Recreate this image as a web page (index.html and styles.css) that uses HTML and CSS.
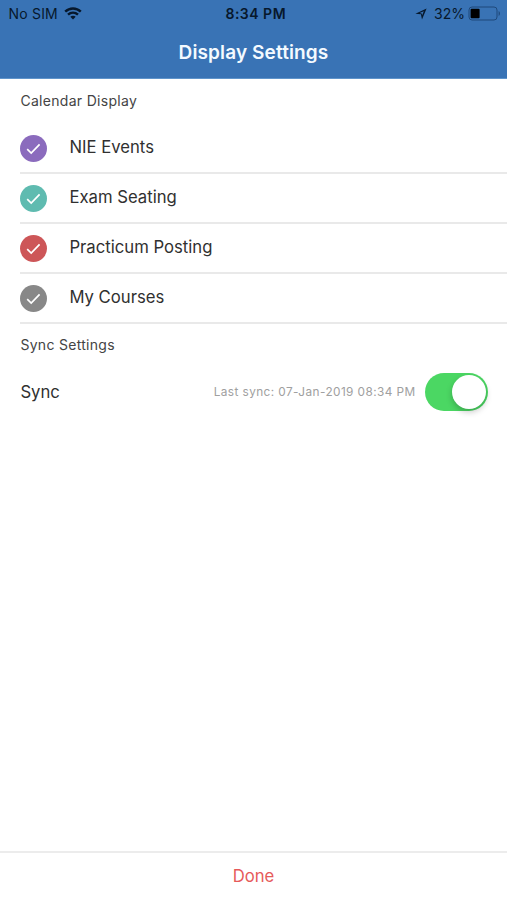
FILE: index.html
```html
<!DOCTYPE html>
<html lang="en">
    <head>
        <title>Display Settings</title>
        <meta charset="UTF-8">
        <meta name="viewport" content="width=device-width, initial-scale=1">
        <link rel="stylesheet" href="styles.css">
    </head>

    <body>
        <header class="header">
            <div class="status-bar">
                <div class="status-left">
                    <span class="carrier">No SIM</span>
                    <svg width="18" height="13" viewBox="0 0 18 13" fill="none" stroke="#07182c" stroke-width="2.4">
                        <path d="M1.2 4.7C5.6 .4 12.4 .4 16.8 4.7"/>
                        <path d="M4 7.7c2.9-2.7 7.1-2.7 10 0"/>
                        <path d="M9 12.4L6.3 9.8c1.5-1.4 3.9-1.4 5.4 0z" fill="#07182c" stroke="none"/>
                    </svg>
                </div>
                <span class="clock">8:34 PM</span>
                <div class="status-right">
                    <svg class="location" width="12" height="12" viewBox="0 0 12 12">
                        <path d="M11.6 .4L7 11.4 5.9 6.3 .4 5.7zM8.8 3.2L4.6 5l2.1.4.4 1.8z" fill="#07182c" fill-rule="evenodd"/>
                    </svg>
                    <span class="percent">32%</span>
                    <svg width="33" height="15" viewBox="0 0 33 15">
                        <rect x="1" y="1" width="28" height="13" rx="3" fill="none" stroke="#1f497b"/>
                        <rect x="2.6" y="2.8" width="9" height="9.5" rx="1" fill="#000"/>
                        <path d="M30.6 5c1.8.8 1.8 4.2 0 5z" fill="#1f497b"/>
                    </svg>
                </div>
            </div>
            <h1>Display Settings</h1>
        </header>

        <main>
            <h2>Calendar Display</h2>
            <ul class="calendars">
                <li>
                    <svg class="check purple" viewBox="0 0 27 27"><path d="M7.2 14.1l4 3.9 8.4-8.6"/></svg>
                    <span>NIE Events</span>
                </li>
                <li>
                    <svg class="check teal" viewBox="0 0 27 27"><path d="M7.2 14.1l4 3.9 8.4-8.6"/></svg>
                    <span>Exam Seating</span>
                </li>
                <li>
                    <svg class="check red" viewBox="0 0 27 27"><path d="M7.2 14.1l4 3.9 8.4-8.6"/></svg>
                    <span>Practicum Posting</span>
                </li>
                <li>
                    <svg class="check gray" viewBox="0 0 27 27"><path d="M7.2 14.1l4 3.9 8.4-8.6"/></svg>
                    <span>My Courses</span>
                </li>
            </ul>

            <h2 class="sync-title">Sync Settings</h2>
            <div class="sync-row">
                <span class="sync-label">Sync</span>
                <span class="last-sync">Last sync: 07-Jan-2019 08:34 PM</span>
                <div class="switch"><div class="knob"></div></div>
            </div>
        </main>

        <footer class="done">Done</footer>
    </body>
</html>
```

FILE: styles.css
```css
* {
    box-sizing: border-box;
}
body {
    display: flex;
    flex-direction: column;
    height: 100vh;
    margin: 0;
    font-family: Inter, "Liberation Sans", sans-serif;
    color: #303030;
    background-color: #fff;
}
.header {
    height: 79px;
    background-color: #3973b5;
    border-bottom: 1px solid #5f94cb;
}
.status-bar {
    display: grid;
    grid-template-columns: 1fr auto 1fr;
    align-items: center;
    height: 27px;
    padding: 0 6px 0 8.5px;
    font-size: 14px;
    color: #07182c;
}
.status-left,
.status-right {
    display: flex;
    align-items: center;
}
.status-left {
    gap: 6px;
}
.carrier {
    letter-spacing: 0.2px;
}
.status-right {
    justify-content: flex-end;
}
.location {
    margin-right: 7px;
}
.percent {
    margin-right: 3px;
}
.clock {
    padding-left: 2px;
    font-weight: 600;
    letter-spacing: 0.5px;
}
h1 {
    margin: 0;
    font-size: 19px;
    font-weight: 600;
    line-height: 51px;
    letter-spacing: 0.12px;
    text-align: center;
    color: #f4faff;
}
main {
    flex: 1;
    padding-left: 20.4px;
}
h2 {
    margin: 0;
    padding-bottom: 1px;
    font-size: 14px;
    font-weight: 400;
    line-height: 44px;
    letter-spacing: 0.3px;
    color: #444;
}
.calendars {
    margin: 0;
    padding: 0;
    list-style: none;
}
.calendars li {
    display: flex;
    align-items: center;
    gap: 22px;
    height: 50px;
    border-bottom: 2px solid #e9e9e9;
    font-size: 16.7px;
}
.calendars span {
    margin-bottom: 3px;
}
.check {
    width: 27px;
    height: 27px;
    border-radius: 50%;
    fill: none;
    stroke: #fff;
    stroke-width: 1.7;
}
.purple {
    background-color: #8b6bbd;
}
.teal {
    background-color: #5fbbb0;
}
.red {
    background-color: #cd5658;
}
.gray {
    background-color: #888;
}
.sync-title {
    line-height: 42px;
}
.sync-row {
    display: flex;
    align-items: center;
    height: 49px;
    padding-right: 19px;
}
.sync-label {
    font-size: 16.7px;
}
.last-sync {
    margin-left: auto;
    margin-right: 9.5px;
    font-size: 11.8px;
    letter-spacing: 0.42px;
    color: #a0a0a0;
}
.switch {
    display: flex;
    justify-content: flex-end;
    width: 63px;
    height: 38px;
    padding: 2px;
    border-radius: 19px;
    background-color: #4bd763;
}
.knob {
    width: 34px;
    height: 34px;
    border-radius: 50%;
    background-color: #fff;
    box-shadow: 0 3px 6px rgba(0, 0, 0, 0.22);
}
.done {
    height: 49px;
    border-top: 2px solid #ececec;
    font-size: 16.7px;
    line-height: 47px;
    text-align: center;
    color: #e65a5a;
}
```
